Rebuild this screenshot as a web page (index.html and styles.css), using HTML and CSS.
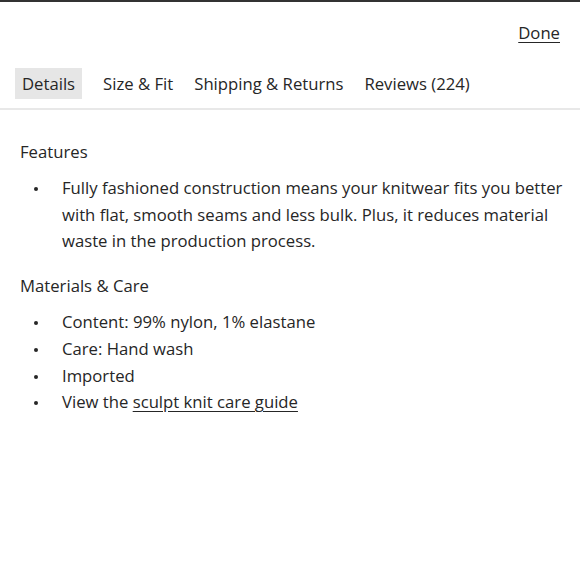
FILE: index.html
```html
<!DOCTYPE html>
<html>
<head>
<meta charset="utf-8">
<link rel="stylesheet" href="styles.css">
</head>
<body>
<div class="sheet">
  <div class="topbar"><a class="done" href="#">Done</a></div>
  <nav class="tabs">
    <span class="tab active">Details</span>
    <span class="tab">Size &amp; Fit</span>
    <span class="tab">Shipping &amp; Returns</span>
    <span class="tab">Reviews (224)</span>
  </nav>
  <div class="content">
    <h2 class="heading">Features</h2>
    <ul class="list">
      <li>Fully fashioned construction means your knitwear fits you better with flat, smooth seams and less bulk. Plus, it reduces material waste in the production process.</li>
    </ul>
    <h2 class="heading">Materials &amp; Care</h2>
    <ul class="list">
      <li>Content: 99% nylon, 1% elastane</li>
      <li>Care: Hand wash</li>
      <li>Imported</li>
      <li>View the <a href="#" class="link">sculpt knit care guide</a></li>
    </ul>
  </div>
</div>
</body>
</html>
```
FILE: styles.css
```css
* { box-sizing: border-box; }
html, body { margin: 0; padding: 0; background: #fff; }
body {
  font-family: "Open Sans", Lato, sans-serif;
  font-size: 16.7px;
  color: #262626;
}
.sheet { border-top: 2px solid #333; min-height: 580px; }
.topbar {
  display: flex;
  justify-content: flex-end;
  padding: 20px 20px 0 0;
  height: 66px;
}
.done { color: #262626; text-decoration: underline; text-underline-offset: 3px; line-height: 22px; }
.tabs {
  display: flex;
  gap: 7px;
  padding: 0 0 9px 15px;
  border-bottom: 2px solid #e8e8e8;
}
.tab {
  padding: 4px 7px;
  line-height: 23px;
  white-space: nowrap;
}
.tab.active { background: #e6e6e6; margin-right: 7px; }
.content { padding: 31px 12px 0 20px; }
.heading { font-size: inherit; font-weight: normal; margin: 0 0 12px; line-height: 22px; }
.list { margin: 0 0 20px; padding: 0; list-style: none; line-height: 26.7px; }
.list li { position: relative; padding-left: 42px; }
.list li::before {
  content: "";
  position: absolute;
  left: 14px;
  top: 12px;
  width: 4px;
  height: 4px;
  border-radius: 50%;
  background: #262626;
}
.link { color: #262626; text-decoration: underline; text-underline-offset: 3px; }
```
